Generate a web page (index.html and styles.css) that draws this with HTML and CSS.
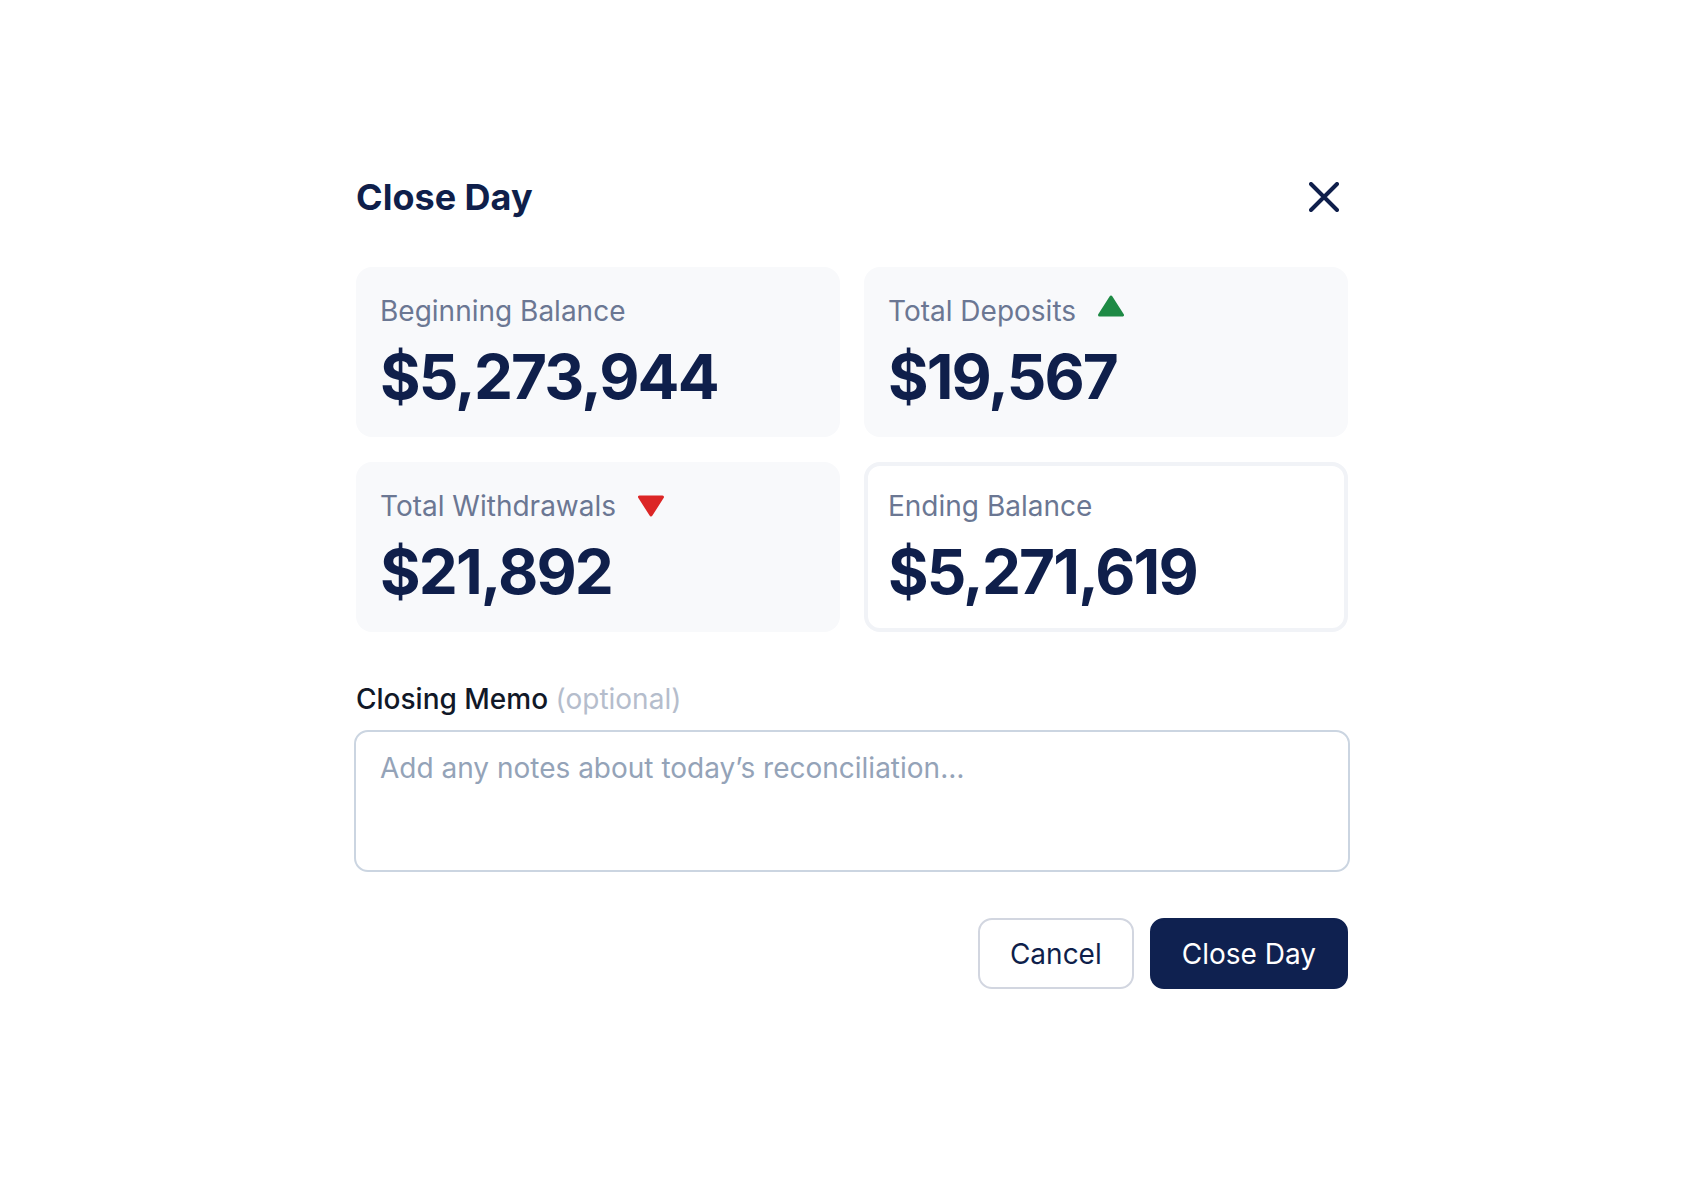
FILE: index.html
```html
<!DOCTYPE html>
<html lang="en">
<head>
    <meta charset="UTF-8">
    <meta name="viewport" content="width=device-width, initial-scale=1.0">
    <title>Close Day</title>
    <link rel="stylesheet" href="styles.css">
</head>
<body>
    <div class="dialog">
        <header class="dialog-header">
            <h1>Close Day</h1>
            <button class="close-btn" aria-label="Close">
                <svg width="30" height="30" viewBox="0 0 30 30">
                    <path d="M2 2 L28 28 M28 2 L2 28" stroke="#0f1f4b" stroke-width="4" stroke-linecap="round" fill="none"/>
                </svg>
            </button>
        </header>

        <div class="stats">
            <div class="stat">
                <div class="stat-label">Beginning Balance</div>
                <div class="stat-value">$5,273,944</div>
            </div>
            <div class="stat">
                <div class="stat-label">
                    Total Deposits
                    <svg class="trend trend-up" width="26" height="22" viewBox="0 0 26 22">
                        <path d="M13 2 L24.5 20 H1.5 Z" fill="#1e8a45" stroke="#1e8a45" stroke-width="3" stroke-linejoin="round"/>
                    </svg>
                </div>
                <div class="stat-value">$19,567</div>
            </div>
            <div class="stat">
                <div class="stat-label">
                    Total Withdrawals
                    <svg class="trend" width="26" height="22" viewBox="0 0 26 22">
                        <path d="M1.5 2 H24.5 L13 20 Z" fill="#dc2626" stroke="#dc2626" stroke-width="3" stroke-linejoin="round"/>
                    </svg>
                </div>
                <div class="stat-value">$21,892</div>
            </div>
            <div class="stat stat-ending">
                <div class="stat-label">Ending Balance</div>
                <div class="stat-value">$5,271,619</div>
            </div>
        </div>

        <label class="memo-label" for="memo">Closing Memo <span class="optional">(optional)</span></label>
        <textarea id="memo" placeholder="Add any notes about today’s reconciliation…"></textarea>

        <div class="actions">
            <button class="btn btn-secondary">Cancel</button>
            <button class="btn btn-primary">Close Day</button>
        </div>
    </div>
</body>
</html>
```

FILE: styles.css
```css
body {
    margin: 0;
    padding: 0;
    background-color: #fff;
    font-family: Inter, "Noto Sans", sans-serif;
    color: #0f1f4b;
}
.dialog {
    width: 992px;
    margin: 0 auto;
    padding-top: 175px;
}
.dialog-header {
    display: flex;
    justify-content: space-between;
    align-items: center;
    height: 44px;
}
h1 {
    margin: 0;
    font-size: 36px;
    line-height: 44px;
    font-weight: 700;
    color: #0f1f4b;
}
.close-btn {
    width: 48px;
    height: 48px;
    padding: 0;
    border: none;
    background: none;
    display: flex;
    align-items: center;
    justify-content: center;
    cursor: pointer;
}
.stats {
    display: grid;
    grid-template-columns: 1fr 1fr;
    gap: 25px 24px;
    margin-top: 48px;
}
.stat {
    background-color: #f8f9fb;
    border-radius: 16px;
    padding: 24px;
}
.stat-ending {
    background-color: #fff;
    border: 4px solid #f1f3f7;
    padding: 20px;
}
.stat-label {
    display: flex;
    align-items: center;
    gap: 22px;
    font-size: 28px;
    line-height: 40px;
    color: #6b7793;
}
.trend-up {
    margin-top: -10px;
}
.stat-value {
    margin-top: 10px;
    font-size: 62px;
    line-height: 72px;
    font-weight: 700;
    letter-spacing: -0.03em;
    color: #0f1f4b;
}
.memo-label {
    display: block;
    margin-top: 47px;
    font-size: 28px;
    line-height: 40px;
    font-weight: 500;
    color: #111827;
}
.optional {
    font-weight: 400;
    color: #b5bdcc;
}
textarea {
    display: block;
    box-sizing: border-box;
    width: calc(100% + 4px);
    height: 142px;
    margin: 11px -2px 0;
    padding: 16px 24px;
    border: 2px solid #cbd5e1;
    border-radius: 14px;
    font-family: inherit;
    font-size: 28px;
    line-height: 40px;
    color: #0f1f4b;
    resize: none;
    outline: none;
}
textarea::placeholder {
    color: #94a3b8;
}
.actions {
    display: flex;
    justify-content: flex-end;
    gap: 16px;
    margin-top: 46px;
}
.btn {
    height: 71px;
    padding: 0 30px;
    border: 2px solid transparent;
    border-radius: 14px;
    font-family: inherit;
    font-size: 28px;
    cursor: pointer;
}
.btn-secondary {
    background-color: #fff;
    border-color: #d2d6e0;
    color: #0f1f4b;
}
.btn-primary {
    background-color: #0f2150;
    border-color: #0f2150;
    color: #fff;
}
```
